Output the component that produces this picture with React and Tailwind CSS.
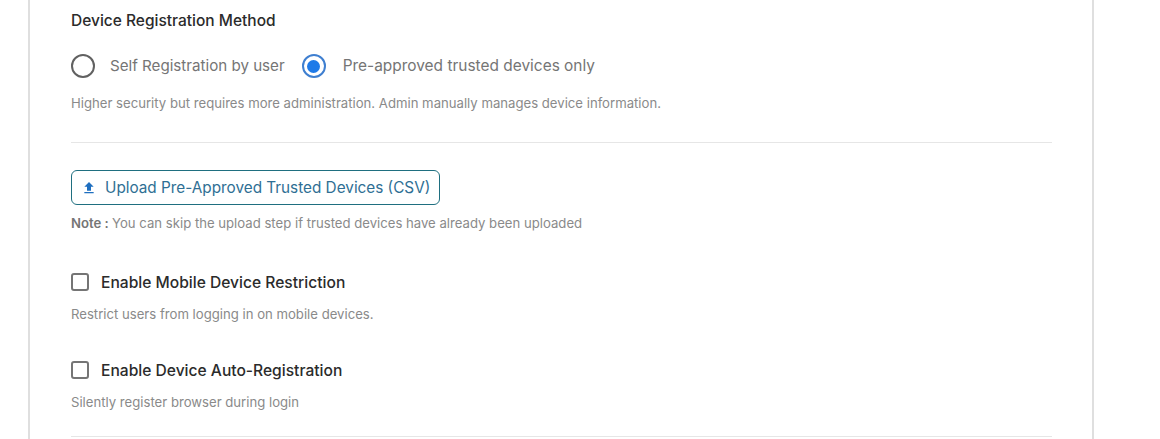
import { MdFileUpload } from "react-icons/md";

function CheckOption({ label, help, className }) {
  return (
    <div className={className}>
      <label className="flex items-center gap-[12px]">
        <span className="w-[18px] h-[18px] rounded-[3px] border-2 border-[#757575] bg-white" />
        <span className="pt-[2px] text-[15.6px] leading-[20px] font-medium text-[#2b2b2b]">{label}</span>
      </label>
      <p className="mt-[12px] text-[13.15px] leading-[18px] text-[#8a8a8a]">{help}</p>
    </div>
  );
}

export default function App() {
  return (
    <div className="w-[1160px] h-[439px] overflow-hidden bg-white pl-[28px] font-['Inter',sans-serif]">
      <div className="w-[1066px] h-[439px] border-x-2 border-[#dfdfdf] pl-[41px] pr-[40px] pt-[11px]">
        <h3 className="text-[15.5px] leading-[20px] font-medium text-[#2b2b2b]">Device Registration Method</h3>

        <div className="flex items-center mt-[22px] h-[26px]">
          <span className="w-[24px] h-[24px] rounded-full border-2 border-[#616161]" />
          <span className="ml-[15px] text-[15.15px] text-[#757575]">Self Registration by user</span>
          <span className="ml-[17px] w-[24px] h-[24px] rounded-full border-2 border-[#3f7fd0] flex items-center justify-center">
            <span className="w-[13px] h-[13px] rounded-full bg-[#1f7ae8]" />
          </span>
          <span className="ml-[17px] text-[15.45px] text-[#757575]">Pre-approved trusted devices only</span>
        </div>

        <p className="mt-[15px] text-[13.15px] leading-[18px] text-[#8a8a8a]">
          Higher security but requires more administration. Admin manually manages device information.
        </p>

        <div className="mt-[30px] border-t border-[#e6e6e6]" />

        <button className="mt-[27px] h-[35px] w-[369px] flex items-center gap-[8px] pl-[9px] rounded-[6px] border border-[#1f6f80] text-[15.3px] text-[#2f6f94]">
          <MdFileUpload className="w-[16px] h-[16px] text-[#1f6fc0]" />
          <span className="pt-[2px]">Upload Pre-Approved Trusted Devices (CSV)</span>
        </button>

        <p className="mt-[9px] text-[13.15px] leading-[18px] text-[#8a8a8a]">
          <span className="font-semibold text-[#757575]">Note : </span>
          You can skip the upload step if trusted devices have already been uploaded
        </p>

        <CheckOption
          className="mt-[39px]"
          label="Enable Mobile Device Restriction"
          help="Restrict users from logging in on mobile devices."
        />
        <CheckOption
          className="mt-[36px]"
          label="Enable Device Auto-Registration"
          help="Silently register browser during login"
        />

        <div className="mt-[25px] border-t border-[#e6e6e6]" />
      </div>
    </div>
  );
}
